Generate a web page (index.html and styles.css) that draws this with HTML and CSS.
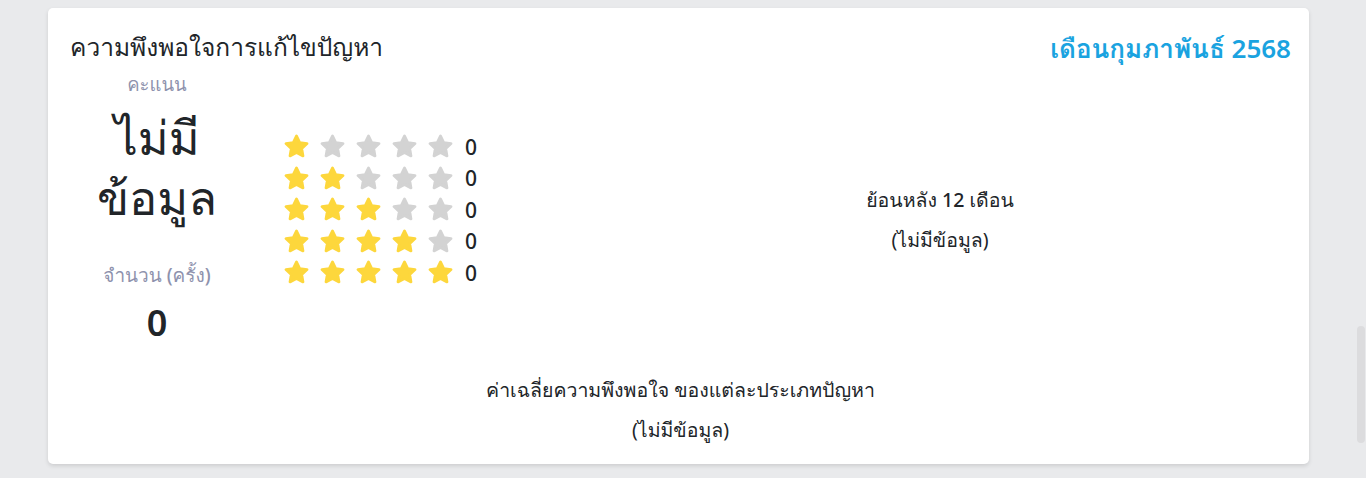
FILE: index.html
```html
<!DOCTYPE html>
<html lang="th">
<head>
<meta charset="UTF-8" />
<meta name="viewport" content="width=device-width, initial-scale=1" />
<title>ความพึงพอใจการแก้ไขปัญหา</title>
<link rel="stylesheet" href="styles.css">
</head>
<body>

<div class="card">
  <div class="card-head">
    <h2>ความพึงพอใจการแก้ไขปัญหา</h2>
    <div class="month">เดือนกุมภาพันธ์ 2568</div>
  </div>

  <div class="card-row">
    <!-- summary -->
    <div class="summary">
      <div class="label">คะแนน</div>
      <div class="score">ไม่มี<br>ข้อมูล</div>
      <div class="label label-count">จำนวน (ครั้ง)</div>
      <div class="count">0</div>
    </div>

    <!-- stars -->
    <div class="stars" id="stars"></div>

    <!-- history -->
    <div class="history">
      <div class="chart-title">ย้อนหลัง 12 เดือน</div>
      <div class="chart-empty">(ไม่มีข้อมูล)</div>
    </div>
  </div>

  <div class="average">
    <div class="chart-title">ค่าเฉลี่ยความพึงพอใจ ของแต่ละประเภทปัญหา</div>
    <div class="chart-empty">(ไม่มีข้อมูล)</div>
  </div>
</div>

<div class="scroll-thumb"></div>

<script>
  // rating rows, 1 to 5 stars
  const counts = [0, 0, 0, 0, 0];
  const starSvg = (on) => `
    <svg class="star ${on ? "on" : ""}" viewBox="0 0 24 24" width="27" height="27">
      <polygon points="12,2.6 14.9,8.5 21.4,9.4 16.7,13.9 17.8,20.4 12,17.3 6.2,20.4 7.3,13.9 2.6,9.4 9.1,8.5" />
    </svg>`;

  const starsBox = document.getElementById("stars");
  counts.forEach((count, i) => {
    const row = document.createElement("div");
    row.className = "star-row";
    let html = "";
    for (let s = 0; s < 5; s++) html += starSvg(s <= i);
    html += `<span class="star-count">${count}</span>`;
    row.innerHTML = html;
    starsBox.appendChild(row);
  });
</script>

</body>
</html>
```

FILE: styles.css
```css
html, body {
  margin: 0;
  padding: 0;
  height: 100%;
  overflow: hidden;
}
body {
  font-family: "Noto Sans", "Leelawadee UI", Loma, Garuda, "Noto Sans Thai Looped", "Noto Sans Thai", Tahoma, sans-serif;
  background: #e9eaec;
  color: #212529;
  padding: 8px 57px 0 48px;
  box-sizing: border-box;
}

.card {
  background: white;
  border-radius: 5px;
  box-shadow: 0 2px 4px rgba(0, 0, 0, 0.12);
  padding: 22px 18px 14px 22px;
  height: 456px;
  box-sizing: border-box;
}
.card-head {
  display: flex;
  justify-content: space-between;
  align-items: flex-start;
}
.card-head h2 {
  margin: 0;
  font-size: 24.5px;
  font-weight: normal;
  line-height: 34px;
}
.month {
  color: #1aa3e0;
  font-size: 26px;
  font-weight: 600;
  line-height: 36px;
}

.card-row {
  display: flex;
}
.summary {
  width: 174px;
  text-align: center;
}
.label {
  color: #8e92ad;
  font-size: 18.5px;
  font-weight: 500;
  line-height: 20px;
  margin-top: 8px;
}
.score {
  font-size: 47px;
  font-weight: 500;
  line-height: 60px;
  margin-top: 13px;
}
.label-count {
  margin-top: 38px;
  font-size: 19px;
}
.count {
  font-size: 36px;
  font-weight: 600;
  line-height: 40px;
  margin-top: 18px;
}

.stars {
  margin-left: 39px;
  padding-top: 65px;
  width: 230px;
}
.star-row {
  display: flex;
  align-items: center;
  gap: 9px;
  height: 31.5px;
}
.star {
  fill: #d3d3d3;
  stroke: #d3d3d3;
  stroke-width: 2.4;
  stroke-linejoin: round;
}
.star.on {
  fill: #fdd73c;
  stroke: #fdd73c;
}
.star-count {
  font-size: 21px;
  font-weight: 500;
  margin-left: 2px;
}

.history {
  flex: 1;
  text-align: center;
  padding-top: 114px;
  padding-left: 76px;
}
.chart-title {
  font-size: 19.5px;
  font-weight: 500;
  line-height: 40px;
}
.chart-empty {
  font-size: 19.5px;
  line-height: 40px;
}
.average {
  text-align: center;
  margin-top: 27px;
}

.scroll-thumb {
  position: absolute;
  right: 1px;
  top: 326px;
  width: 8px;
  height: 117px;
  border-radius: 4px;
  background: #dcdcde;
}
```
